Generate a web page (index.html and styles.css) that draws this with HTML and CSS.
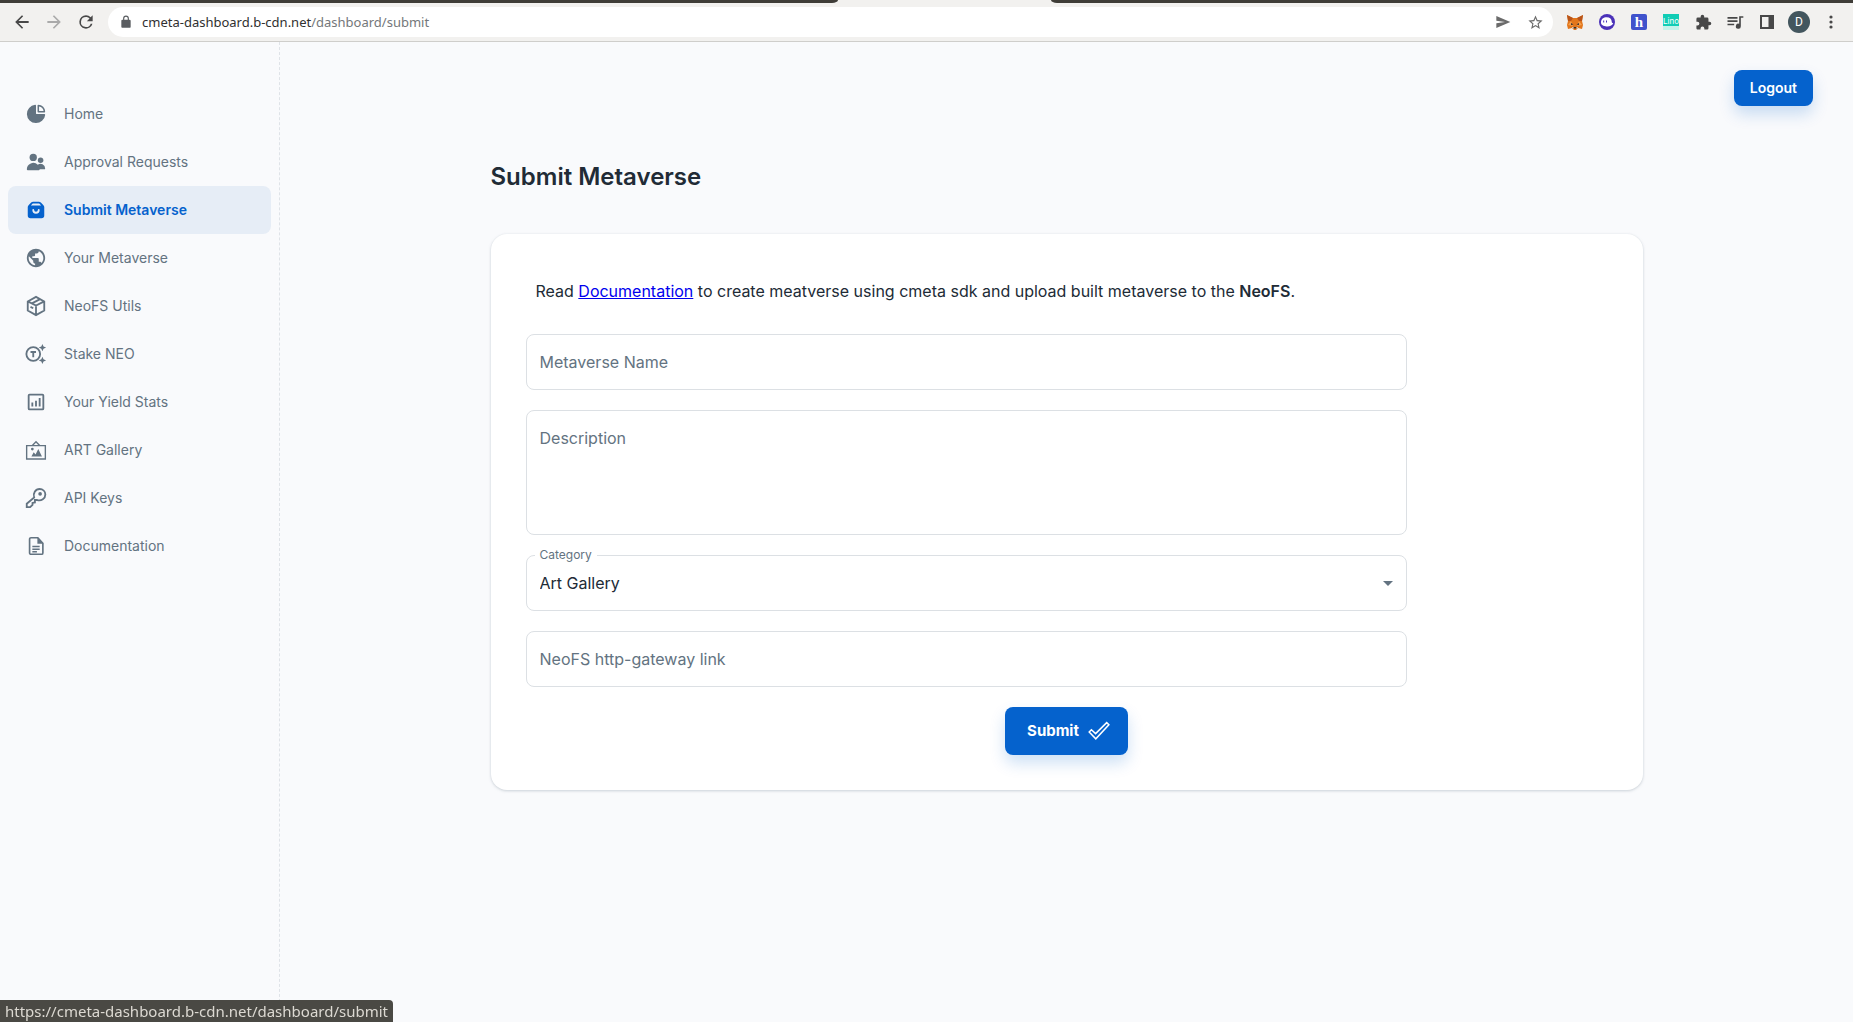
FILE: index.html
```html
<!DOCTYPE html>
<html lang="en">
<head>
<meta charset="utf-8">
<title>Submit Metaverse</title>
<link rel="stylesheet" href="styles.css">
</head>
<body>
<header class="browser">
  <div class="tabstrip"><span class="tabstrip-left"></span><span class="tabstrip-right"></span></div>
  <div class="toolbar">
    <div class="tools">
      <button class="tool" aria-label="Back"><svg width="20" height="20" viewBox="0 0 24 24"><path d="M20 10.8H7.800l5.600-5.600L12 3.800 3.800 12l8.200 8.200 1.400-1.400-5.600-5.600H20z"/></svg></button>
      <button class="tool tool-off" aria-label="Forward" disabled><svg width="20" height="20" viewBox="0 0 24 24"><path d="M4 10.800h12.200l-5.600-5.600L12 3.800l8.200 8.200-8.200 8.200-1.400-1.400 5.600-5.600H4z"/></svg></button>
      <button class="tool" aria-label="Reload"><svg width="20" height="20" viewBox="0 0 24 24"><path d="M17.65 6.350A7.960 7.960 0 0 0 12 4a8 8 0 1 0 7.730 10h-2.080A6 6 0 1 1 12 6c1.660 0 3.140.69 4.220 1.780L13 11h7V4z"/></svg></button>
    </div>
    <div class="omnibox">
      <svg class="lock" width="14" height="14" viewBox="0 0 24 24"><path d="M18 8h-1V6A5 5 0 0 0 7 6v2H6a2 2 0 0 0-2 2v10c0 1.100.9 2 2 2h12a2 2 0 0 0 2-2V10a2 2 0 0 0-2-2zM9 6a3 3 0 0 1 6 0v2H9z"/></svg>
      <span class="url"><span class="url-host">cmeta-dashboard.b-cdn.net</span>/dashboard/submit</span>
      <button class="tool tool-soft" aria-label="Share"><svg width="16" height="16" viewBox="0 0 24 24"><path d="M2 21 23 12 2 3v7l13 2-13 2z"/></svg></button>
      <button class="tool tool-soft" aria-label="Bookmark"><svg width="17" height="17" viewBox="0 0 24 24"><path d="m22 9.240-7.190-.62L12 2 9.190 8.630 2 9.240l5.460 4.730L5.820 21 12 17.270 18.180 21l-1.630-7.030zM12 15.400l-3.760 2.270 1-4.280-3.320-2.880 4.380-.38L12 6.100l1.710 4.040 4.380.38-3.320 2.880 1 4.280z"/></svg></button>
    </div>
    <div class="tools">
      <button class="tool" aria-label="Wallet"><svg width="16" height="16" viewBox="0 0 16 16"><path fill="#e2761b" d="M0 1 6 4h4l6-3-1 6 1 4-1 4-4-1-2 2H7l-2-2-4 1-1-4 1-4z"/><path fill="#b8541a" d="m0 1 6 3-2 3-3 0zm16 0-6 3 2 3 3 0z"/><path fill="#f6a04d" d="m4 7 2 5-5-1zm8 0-2 5 5-1z"/><path fill="#33302f" d="m4 9 2.500 1.500L4 11zm8 0-2.500 1.500L12 11zM6.500 13h3v1.500h-3z"/><path fill="#d5c4b5" d="m5 13 1.500 0 0 2L5 14zm6 0-1.500 0 0 2 1.500-1z"/></svg></button>
      <button class="tool" aria-label="Ghost wallet"><svg width="16" height="16" viewBox="0 0 16 16"><circle cx="8" cy="8" r="8" fill="#4b32b8"/><path fill="#fff" d="M2 8.500C2 5 4.500 3.200 7.700 3.200c3.300 0 5 2 5 4.300 0 1.200.6 1.400 1.500 1.800-.5 2.200-3.700 3.500-6.600 3.200C4.500 12.200 2 11 2 8.500z"/><path fill="#4b32b8" d="M4.200 6.500h1v2h-1zm2.800 0h1v2H7z"/></svg></button>
      <button class="tool" aria-label="Honey"><span class="ext ext-h">h</span></button>
      <button class="tool" aria-label="Lino"><span class="ext ext-l">Lino</span></button>
      <button class="tool" aria-label="Extensions"><svg width="17" height="17" viewBox="0 0 24 24"><path d="M20.500 11H19V7a2 2 0 0 0-2-2h-4V3.500a2.500 2.500 0 0 0-5 0V5H4a2 2 0 0 0-2 2v3.800h1.500a2.700 2.700 0 0 1 0 5.400H2V20c0 1.100.9 2 2 2h3.800v-1.500a2.700 2.700 0 0 1 5.400 0V22H17a2 2 0 0 0 2-2v-4h1.500a2.500 2.500 0 0 0 0-5z"/></svg></button>
      <button class="tool" aria-label="Media"><svg width="20" height="20" viewBox="0 0 24 24"><path d="M15 6H3v2h12zm0 4H3v2h12zM3 16h8v-2H3zM17 5v9.200a3 3 0 1 0 2 2.800V7h3V5z"/></svg></button>
      <button class="tool" aria-label="Side panel"><svg width="14" height="14" viewBox="0 0 14 14"><path fill-rule="evenodd" d="M0 0h14v14H0zm2 2v10h6.500V2z"/></svg></button>
      <button class="tool" aria-label="Profile"><span class="avatar">D</span></button>
      <button class="tool" aria-label="Menu"><svg width="4" height="14" viewBox="0 0 4 14"><circle cx="2" cy="2" r="1.600"/><circle cx="2" cy="7" r="1.600"/><circle cx="2" cy="12" r="1.600"/></svg></button>
    </div>
  </div>
</header>

<div class="app">
  <nav class="sidebar">
    <a class="item" href="#"><svg class="icon" viewBox="0 0 24 24"><path d="M14.500 10.330h6.670A.83.83 0 0 0 22 9.500 7.500 7.500 0 0 0 14.500 2a.83.83 0 0 0-.83.83V9.500a.83.83 0 0 0 .83.83zm.83-6.600a5.830 5.830 0 0 1 4.940 4.940h-4.940z"/><path d="M21.080 12h-8.150a.91.91 0 0 1-.91-.91V2.920A.92.92 0 0 0 11 2a10 10 0 1 0 11 11 .92.92 0 0 0-.92-1z"/></svg>Home</a>
    <a class="item" href="#"><svg class="icon" viewBox="0 0 24 24"><circle cx="9" cy="7" r="4"/><circle cx="17" cy="10" r="3"/><path d="M21 20a1 1 0 0 0 1-1 5 5 0 0 0-8.060-3.950A7 7 0 0 0 2 20a1 1 0 0 0 1 1h12a1 1 0 0 0 1-1z"/></svg>Approval Requests</a>
    <a class="item item-on" href="#" aria-current="page"><svg class="icon" viewBox="0 0 24 24"><path d="M20.120 6.710l-2.830-2.830A3 3 0 0 0 15.170 3H8.830a3 3 0 0 0-2.120.88L3.880 6.710A3 3 0 0 0 3 8.830V18a3 3 0 0 0 3 3h12a3 3 0 0 0 3-3V8.830a3 3 0 0 0-.88-2.120zM12 16a4 4 0 0 1-4-4 1 1 0 0 1 2 0 2 2 0 0 0 4 0 1 1 0 0 1 2 0 4 4 0 0 1-4 4zM6.410 7l1.710-1.710A1.050 1.050 0 0 1 8.830 5h6.340a1.050 1.050 0 0 1 .71.29L17.590 7z"/></svg>Submit Metaverse</a>
    <a class="item" href="#"><svg class="icon" viewBox="0 0 24 24"><path d="M12 2C6.480 2 2 6.480 2 12s4.480 10 10 10 10-4.480 10-10S17.520 2 12 2zm-1 17.930c-3.950-.49-7-3.850-7-7.930 0-.62.08-1.210.21-1.790L9 15v1c0 1.100.9 2 2 2v1.930zm6.900-2.540c-.26-.81-1-1.390-1.900-1.390h-1v-3c0-.55-.45-1-1-1H8v-2h2c.55 0 1-.45 1-1V7h2c1.100 0 2-.9 2-2v-.41c2.930 1.190 5 4.060 5 7.410 0 2.080-.8 3.970-2.100 5.390z"/></svg>Your Metaverse</a>
    <a class="item" href="#"><svg class="icon icon-line" viewBox="0 0 24 24"><path d="M12 2 21 7v10l-9 5-9-5V7zM3 7l9 4.500L21 7M12 11.500V22M6 13l3 1.500"/><path d="m7.500 9.200 9-4.700"/></svg>NeoFS Utils</a>
    <a class="item" href="#"><svg class="icon icon-line" viewBox="0 0 24 24"><circle cx="9" cy="12" r="7.500"/><path d="M6 9.800h6M9 9.800V15.500"/><path class="solid" d="m19 1 1.200 2.800L23 5l-2.800 1.200L19 9l-1.200-2.800L15 5l2.800-1.200zm0 14 1.200 2.800L23 19l-2.800 1.200L19 23l-1.200-2.800L15 19l2.800-1.200z"/></svg>Stake NEO</a>
    <a class="item" href="#"><svg class="icon icon-line" viewBox="0 0 24 24"><rect x="4" y="4" width="16" height="16" rx="1"/><path d="M8 12.500V17M12 10.500V17M16 7.500V17"/></svg>Your Yield Stats</a>
    <a class="item" href="#"><svg class="icon icon-line icon-thin" viewBox="0 0 24 24"><path d="M1.800 7.200h20.400v14.600H1.800zM8 7l4-4 4 4"/><path class="solid" d="M7 19l2.500-4.500 2 2.500 3-6 4 8z"/><circle class="solid" cx="8" cy="11" r="1.500"/></svg>ART Gallery</a>
    <a class="item" href="#"><svg class="icon icon-line" viewBox="0 0 24 24"><path d="M10 11.500c-1.600-4.500 1.300-9.300 6-9.300 3.400 0 6.200 2.500 6.200 6 0 4.500-4.400 7.200-8.800 6h-2.600v2.600l-2.600.6v2l-2.600 2.600H1.900v-3.800z"/><circle class="solid" cx="16.500" cy="7.500" r="2"/></svg>API Keys</a>
    <a class="item" href="#"><svg class="icon icon-line" viewBox="0 0 24 24"><path d="M6.500 3H14l5.500 6v10.500a1.500 1.500 0 0 1-1.500 1.500H6.500A1.500 1.500 0 0 1 5 19.500v-15A1.500 1.500 0 0 1 6.500 3M8 12.500h8M8 15.500h8M8 18.300h5" stroke-width="1.800"/><path class="solid" d="M13.500 3v6.500H20z"/></svg>Documentation</a>
  </nav>

  <main class="main">
    <div class="topbar"><button class="btn btn-logout">Logout</button></div>
    <section class="container">
      <h1 class="title">Submit Metaverse</h1>
      <form class="card">
        <p class="intro">Read <a href="#">Documentation</a> to create meatverse using cmeta sdk and upload built metaverse to the <strong>NeoFS</strong>.</p>
        <input class="field" type="text" placeholder="Metaverse Name" aria-label="Metaverse Name">
        <textarea class="field field-area" placeholder="Description" aria-label="Description"></textarea>
        <div class="select-wrap">
          <label class="select-label" for="category">Category</label>
          <select class="field" id="category"><option>Art Gallery</option></select>
          <svg class="caret" width="10" height="5" viewBox="0 0 10 5"><path d="M0 0h10L5 5z"/></svg>
        </div>
        <input class="field" type="text" placeholder="NeoFS http-gateway link" aria-label="NeoFS http-gateway link">
        <button class="btn btn-submit" type="button">Submit<svg class="check" viewBox="0 0 22 22"><path d="m1.200 12 2.200-2.300 4.200 3.900L18.700 2.600l2.200 2.200L7.800 18.800z"/></svg></button>
      </form>
    </section>
  </main>
</div>
<div class="status">https://cmeta-dashboard.b-cdn.net/dashboard/submit</div>
</body>
</html>
```
FILE: styles.css
```css
* { box-sizing: border-box; }

body {
  margin: 0;
  min-height: 100vh;
  display: flex;
  flex-direction: column;
  background: #f9fafc;
  color: #212b36;
  font: 16px/24px Inter, sans-serif;
}

button { font: inherit; cursor: pointer; }

/* Browser frame */
.browser {
  background: #f2f1ef;
  border-bottom: 1px solid #cfcecb;
  font-family: "Noto Sans", sans-serif;
}
.tabstrip { display: flex; justify-content: space-between; height: 3px; }
.tabstrip span { background: #3f3d38; }
.tabstrip-left { width: 838px; border-bottom-right-radius: 6px 3px; }
.tabstrip-right { width: calc(100% - 1051px); border-bottom-left-radius: 6px 3px; }
.toolbar { display: flex; align-items: center; gap: 6px; padding: 4px 6px; }
.tools { display: flex; }
.tool {
  width: 32px;
  height: 30px;
  padding: 0;
  border: 0;
  background: none;
  display: flex;
  align-items: center;
  justify-content: center;
  fill: #484848;
}
.tool-off { fill: #aaa; }
.tool-soft { fill: #6b6b6b; }
.omnibox {
  flex: 1;
  display: flex;
  align-items: center;
  height: 30px;
  padding: 0 2px 0 11px;
  border-radius: 15px;
  background: #fff;
}
.lock { fill: #5a5d61; }
.url { flex: 1; margin-left: 9px; font-size: 13px; line-height: 20px; color: #74777a; }
.url-host { color: #303030; }
.ext {
  width: 16px;
  height: 16px;
  border-radius: 2px;
  color: #fff;
  text-align: center;
}
.ext-h { background: #4053cc; font: bold 15px/16px "Liberation Serif", serif; }
.ext-l { background: linear-gradient(#12cdb5 75%, #c5f2ea 75%); font: 8px/15px Inter, sans-serif; border-radius: 0; }
.avatar {
  width: 22px;
  height: 22px;
  border-radius: 50%;
  background: #43565e;
  color: #fff;
  font: 12px/22px Roboto, sans-serif;
}

/* Dashboard */
.app { flex: 1; display: flex; }
.sidebar {
  width: 280px;
  flex: none;
  padding: 48px 8px 0;
  border-right: 1px dashed #dfe3e8;
}
.item {
  display: flex;
  align-items: center;
  gap: 16px;
  height: 48px;
  padding: 0 16px;
  border-radius: 8px;
  color: #637381;
  font-size: 14px;
  line-height: 22px;
  text-decoration: none;
}
.item-on { background: #e6edf6; color: #0562cd; font-weight: 600; }
.icon { width: 24px; height: 24px; padding: 1px; fill: currentColor; }
.icon-line { fill: none; stroke: currentColor; stroke-width: 2; }
.icon-thin { stroke-width: 1.500; }
.icon .solid { fill: currentColor; stroke: none; }

.main { flex: 1; min-width: 0; }
.topbar { display: flex; justify-content: flex-end; padding: 28px 40px; }
.btn {
  border: 0;
  border-radius: 8px;
  background: #0562cd;
  color: #fff;
  font-weight: 700;
  box-shadow: 0 8px 16px rgba(5, 98, 205, .2);
}
.btn-logout { height: 36px; padding: 0 16px; font-size: 14px; font-weight: 600; }
.container { max-width: 1200px; margin: 0 auto; padding: 25px 24px; }
.title { margin: 0 0 39px; font-size: 24px; line-height: 36px; font-weight: 600; }
.card {
  display: flex;
  flex-direction: column;
  gap: 20px;
  padding: 35px;
  border-radius: 16px;
  background: #fff;
  box-shadow: 0 0 2px rgba(145, 158, 171, .1), 0 1px 3px rgba(145, 158, 171, .4);
}
.intro { margin: 10px 10px 11px; }
.intro a { color: #00e; }
.intro strong { font-weight: 600; }
.field {
  display: block;
  width: 100%;
  max-width: 881px;
  height: 56px;
  padding: 0 13px;
  border: 1px solid #dce0e4;
  border-radius: 8px;
  background: #fff;
  color: #212b36;
  font: inherit;
}
.field::placeholder { color: #637381; opacity: 1; }
.field-area { height: 125px; padding: 15px 13px; resize: none; }
.select-wrap { position: relative; max-width: 881px; }
.select-wrap .field { appearance: none; }
.select-label {
  position: absolute;
  top: -8px;
  left: 9px;
  padding: 0 5px;
  background: #fff;
  color: #637381;
  font-size: 12px;
  line-height: 16px;
}
.caret { position: absolute; top: 26px; right: 14px; fill: #637381; }
.btn-submit {
  align-self: center;
  display: flex;
  align-items: center;
  gap: 9px;
  height: 48px;
  padding: 0 18px 0 22px;
  font-size: 15px;
}
.check { width: 22px; height: 22px; fill: none; stroke: #fff; stroke-width: 1.500; }

.status {
  position: fixed;
  left: 0;
  bottom: 0;
  padding: 0 5px;
  border-top-right-radius: 4px;
  background: #4a4944;
  color: #dcd9d2;
  font: 15px/22px "Noto Sans", sans-serif;
}
```
